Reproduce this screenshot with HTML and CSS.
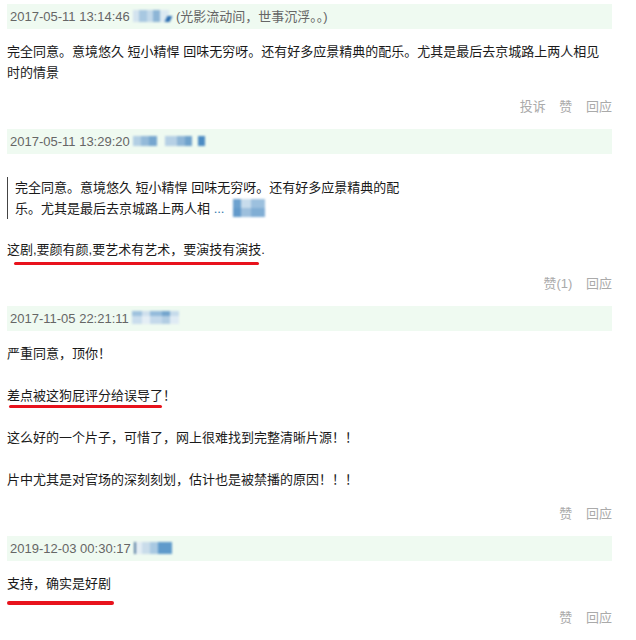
FILE: index.html
```html
<!DOCTYPE html>
<html lang="zh-CN">
	<head>
		<meta charset="UTF-8" />
		<meta name="viewport" content="width=device-width, initial-scale=1.0" />
		<title>回应</title>
		<link rel="stylesheet" href="styles.css">
	</head>
	<body>
		<div class="comments">
			<div class="comment">
				<div class="comment-head">
					<span class="time">2017-05-11 13:14:46</span>
					<span class="blur blur-1"></span>
					<span class="sign">(光影流动间，世事沉浮。。)</span>
				</div>
				<div class="comment-body">
					<p>完全同意。意境悠久 短小精悍 回味无穷呀。还有好多应景精典的配乐。尤其是最后去京城路上两人相见时的情景</p>
				</div>
				<div class="actions">
					<a>投诉</a>
					<a>赞</a>
					<a>回应</a>
				</div>
			</div>

			<div class="comment">
				<div class="comment-head">
					<span class="time">2017-05-11 13:29:20</span>
					<span class="blur blur-2"></span>
				</div>
				<div class="comment-body">
					<blockquote class="quote"><span>完全同意。意境悠久 短小精悍 回味无穷呀。还有好多应景精典的配</span><span>乐。尤其是最后去京城路上两人相</span> <span class="more">...</span><span class="blur blur-q"></span></blockquote>
					<p><span class="mark mark-a">这剧,要颜有颜,要艺术有艺术，要演技有演技.</span></p>
				</div>
				<div class="actions">
					<a>赞(1)</a>
					<a>回应</a>
				</div>
			</div>

			<div class="comment">
				<div class="comment-head">
					<span class="time">2017-11-05 22:21:11</span>
					<span class="blur blur-3"></span>
				</div>
				<div class="comment-body">
					<p>严重同意，顶你！</p>
					<p><span class="mark mark-b">差点被这狗屁评分给误导了！</span></p>
					<p>这么好的一个片子，可惜了，网上很难找到完整清晰片源！！</p>
					<p>片中尤其是对官场的深刻刻划，估计也是被禁播的原因！！！</p>
				</div>
				<div class="actions">
					<a>赞</a>
					<a>回应</a>
				</div>
			</div>

			<div class="comment">
				<div class="comment-head">
					<span class="time">2019-12-03 00:30:17</span>
					<span class="blur blur-4"></span>
				</div>
				<div class="comment-body">
					<p><span class="mark mark-c">支持，确实是好剧</span></p>
				</div>
				<div class="actions">
					<a>赞</a>
					<a>回应</a>
				</div>
			</div>
		</div>
	</body>
</html>
```

FILE: styles.css
```css
*,
*::before,
*::after {
	box-sizing: border-box;
}
body {
	margin: 0;
	background-color: #ffffff;
	color: #1a1a1a;
	font-family: 'Liberation Sans', 'Noto Sans CJK SC', sans-serif;
	font-size: 13px;
	line-height: 21px;
}
.comments {
	width: 612px;
	padding: 4px 0 0 7px;
}
.comment {
	margin-bottom: 12px;
}
.comment-head {
	height: 25px;
	line-height: 25px;
	padding-left: 3px;
	background-color: #effaf1;
	color: #666666;
	white-space: nowrap;
}
.comment-head .sign {
	margin-left: 3px;
}
.blur {
	display: inline-block;
	position: relative;
	height: 12px;
	vertical-align: -1px;
	filter: blur(0.8px);
}
.blur-1 {
	width: 36px;
	background: linear-gradient(90deg, #d3e3ef 0 6px, #a8c8e1 6px 14px, #c3d9ea 14px 20px, #8db5d6 20px 27px, #dce9f2 27px 36px);
}
.blur-1::after {
	content: '';
	position: absolute;
	right: -2px;
	bottom: 0;
	width: 5px;
	height: 6px;
	background: #2c6db0;
	transform: skewX(-25deg);
}
.blur-2 {
	width: 72px;
	height: 10px;
	vertical-align: 0;
	background: linear-gradient(90deg, #b3cfe4 0 8px, #94bad9 8px 16px, #76a6cf 16px 24px, transparent 24px 32px, #b6d0e5 32px 44px, #8fb6d7 44px 52px, #6fa2cc 52px 59px, transparent 59px 65px, #4b8bc3 65px 72px);
}
.blur-3 {
	width: 47px;
	height: 13px;
	background: linear-gradient(180deg, transparent 0 5px, rgba(255, 255, 255, 0.45) 5px), linear-gradient(90deg, #9fc2de 0 10px, #cfe0ed 10px 18px, #94bbdb 18px 30px, #74a5cd 30px 38px, #c6dbeb 38px 47px);
}
.blur-4 {
	width: 38px;
	background: linear-gradient(90deg, #5a7fa3 0 2px, #e3edf4 2px 8px, #c9dcea 8px 16px, #a9c9e2 16px 24px, #5f9acb 24px 38px);
}
.blur-q {
	width: 32px;
	height: 18px;
	margin-left: 9px;
	vertical-align: -4px;
	background: linear-gradient(180deg, transparent 0 9px, rgba(80, 140, 195, 0.35) 9px), linear-gradient(90deg, #6da2cf 0 8px, #c8dcec 8px 18px, #9cc0de 18px 32px);
}
.comment-body {
	padding-top: 12px;
	padding-right: 8px;
}
.comment-body p {
	margin: 0 0 21px;
}
.comment-body p:last-child {
	margin-bottom: 0;
}
.quote {
	width: 400px;
	margin: 11px 0 20px;
	padding-left: 7px;
	border-left: 1px solid #444444;
}
.quote .more {
	color: #3377aa;
}
.mark {
	position: relative;
	display: inline-block;
}
.mark::after {
	content: '';
	position: absolute;
	height: 3px;
	border-radius: 2px;
	background-color: #e8121c;
}
.mark-a::after {
	left: 7px;
	right: 6px;
	bottom: -5px;
}
.mark-b::after {
	left: 2px;
	right: 14px;
	bottom: -2px;
}
.mark-c::after {
	left: 0;
	right: -3px;
	bottom: -11px;
	height: 4px;
}
.actions {
	margin-top: 13px;
	text-align: right;
	color: #aaaaaa;
}
.actions a {
	margin-left: 10px;
}
```
